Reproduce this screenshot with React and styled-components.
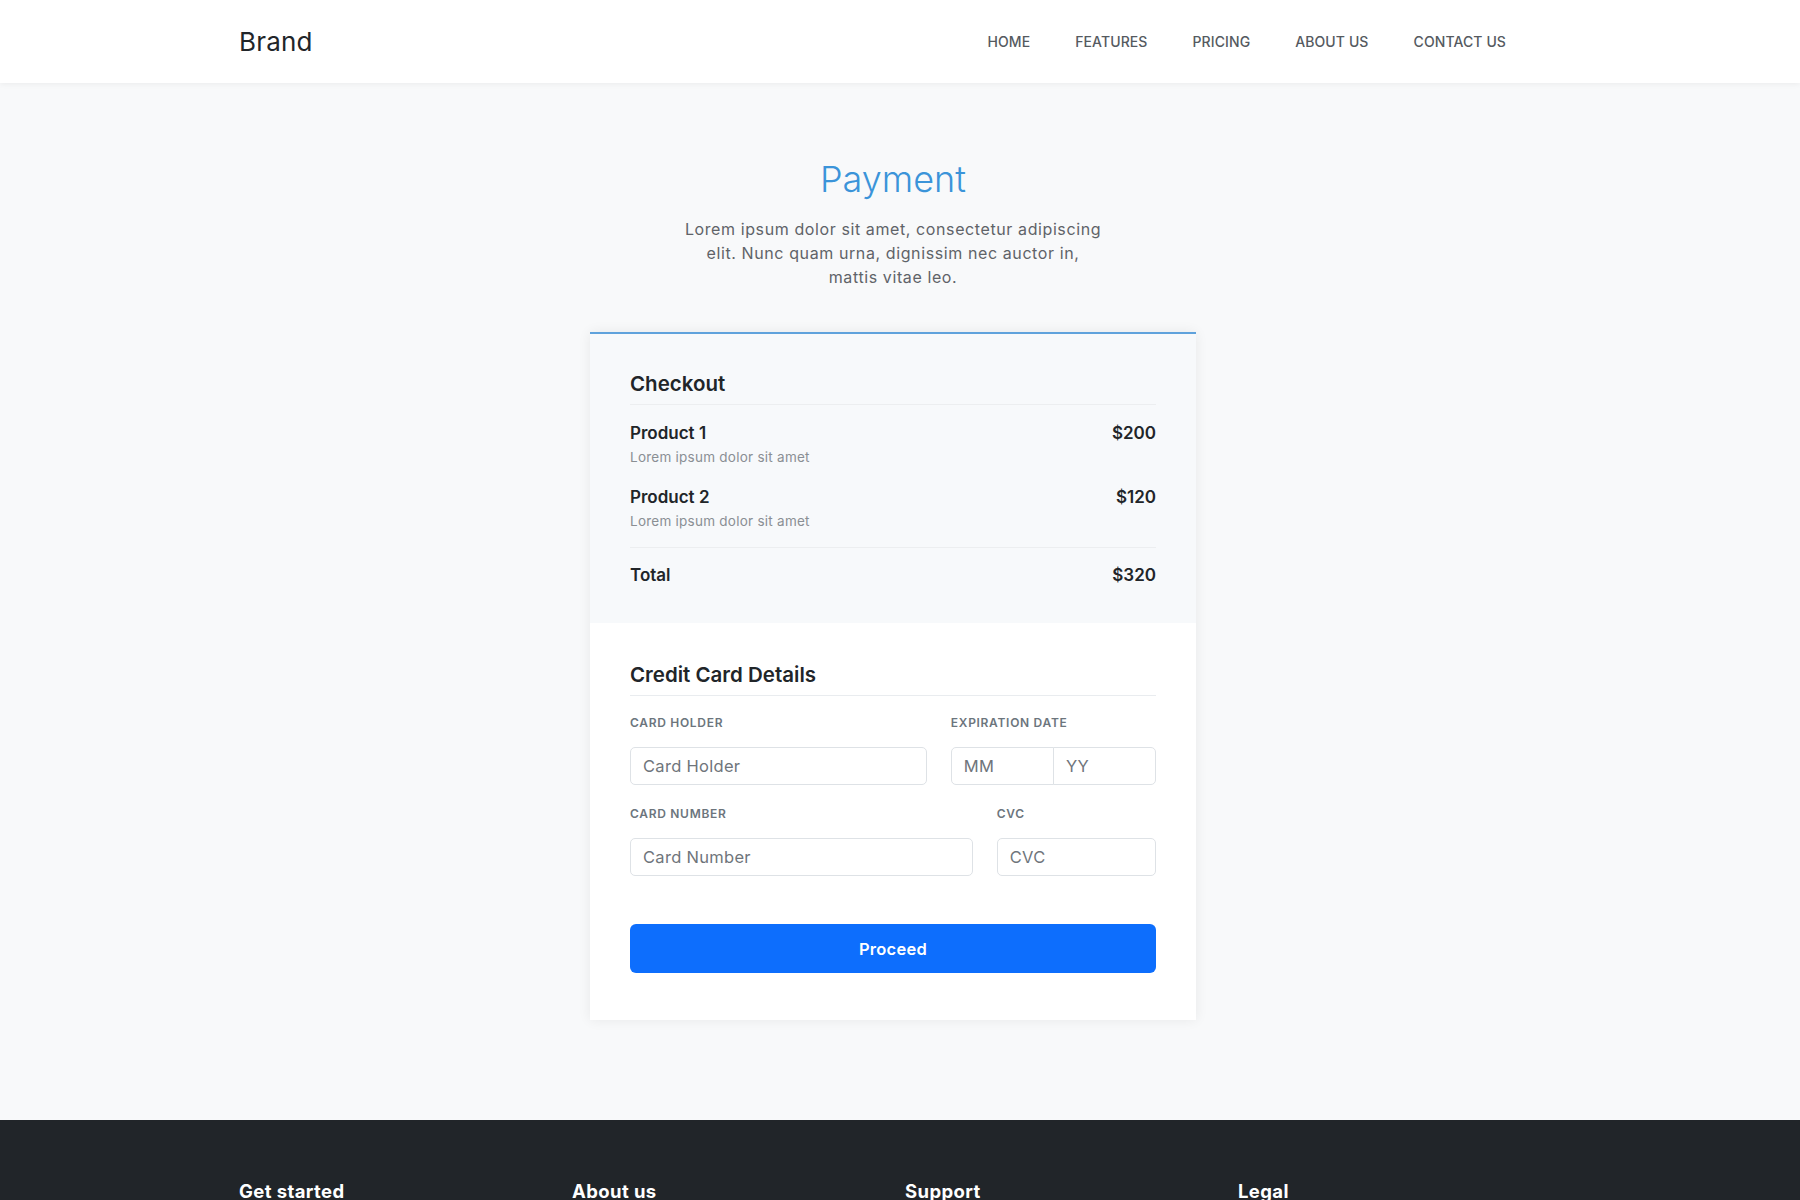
import React from "react";
import styled, { createGlobalStyle } from "styled-components";

const GlobalStyle = createGlobalStyle`
  *, *::before, *::after { box-sizing: border-box; }
  html, body { margin: 0; padding: 0; }
  body {
    background: #f8f9fa;
    color: #212529;
    font-family: Inter, "Noto Sans", "DejaVu Sans", sans-serif;
    font-size: 16px;
    -webkit-font-smoothing: antialiased;
  }
`;

/* Shared page container: 1308px content, centred in the scroll area */
const Container = styled.div`
  width: 1308px;
  margin: 0 calc(50% - 647px) 0 calc(50% - 661px);
`;

const Header = styled.header`
  background: #ffffff;
  height: 83px;
  box-shadow: 0 1px 6px rgba(0, 0, 0, 0.06);
  position: relative;
  z-index: 1;
`;

const HeaderInner = styled(Container)`
  height: 100%;
  display: flex;
  align-items: center;
  justify-content: space-between;
`;

const Brand = styled.a`
  font-size: 26px;
  font-weight: 400;
  color: #212529;
  text-decoration: none;
  letter-spacing: 0.2px;
`;

const NavList = styled.nav`
  display: flex;
  align-items: center;
  gap: 45px;
  margin-right: 41px;
`;

const NavLink = styled.a`
  font-size: 14px;
  font-weight: 500;
  color: #555a5f;
  text-decoration: none;
  text-transform: uppercase;
  letter-spacing: 0.1px;
`;

const Main = styled.main`
  padding-top: 75px;
  padding-bottom: 100px;
`;

const Intro = styled.div`
  text-align: center;
`;

const PageTitle = styled.h1`
  margin: 0;
  font-size: 36px;
  font-weight: 300;
  line-height: 42px;
  color: #3b94d9;
`;

const Lead = styled.p`
  margin: 17px 0 0;
  font-size: 16px;
  line-height: 24px;
  letter-spacing: 0.6px;
  color: #5f6368;
`;

const Card = styled.section`
  width: 606px;
  margin: 43px auto 0;
  background: #ffffff;
  border-top: 2px solid #5fa2dc;
  box-shadow: 0 0 12px rgba(0, 0, 0, 0.07);
`;

const CardSection = styled.div`
  background: ${(p) => (p.$muted ? "#f7f9fb" : "#ffffff")};
  padding: ${(p) => p.$padding};
`;

const SectionTitle = styled.h4`
  margin: 0;
  font-size: 20.5px;
  font-weight: 600;
  line-height: 24px;
  color: #212529;
  padding-bottom: 8px;
  border-bottom: 1px solid ${(p) => (p.$muted ? "#eceef0" : "#e9ecef")};
`;

const ItemList = styled.ul`
  list-style: none;
  margin: 8px 0 0;
  padding: 0;
`;

const Item = styled.li`
  display: flex;
  justify-content: space-between;
  align-items: flex-start;
  padding: 10px 0;
`;

const ItemName = styled.div`
  font-size: 17px;
  font-weight: 600;
  line-height: 20px;
  color: #212529;
`;

const ItemDesc = styled.div`
  margin-top: 4px;
  font-size: 13.5px;
  line-height: 20px;
  letter-spacing: 0.25px;
  color: #8a8f94;
`;

const Price = styled.span`
  font-size: 17px;
  font-weight: 600;
  line-height: 20px;
  color: #212529;
`;

const Divider = styled.hr`
  margin: 6px 0 0;
  border: 0;
  border-top: 1px solid #eceef0;
`;

const TotalRow = styled.div`
  display: flex;
  justify-content: space-between;
  margin-top: 17px;
  font-size: 17px;
  font-weight: 600;
  line-height: 20px;
`;

const FormRow = styled.div`
  display: flex;
  gap: 24px;
  margin-top: ${(p) => p.$top};
`;

const Col = styled.div`
  flex: 0 0 calc((100% + 24px) * ${(p) => p.$span} / 12 - 24px);
  min-width: 0;
`;

const Label = styled.label`
  display: block;
  font-size: 12px;
  font-weight: 600;
  line-height: 18px;
  letter-spacing: 0.7px;
  text-transform: uppercase;
  color: #6c757d;
  margin-bottom: 15px;
`;

const Input = styled.input`
  display: block;
  width: 100%;
  height: 38px;
  padding: 0 12px;
  font-family: inherit;
  font-size: 16.5px;
  letter-spacing: 0.3px;
  color: #212529;
  background: #ffffff;
  border: 1px solid #dee2e6;
  border-radius: 5px;
  outline: none;
  &::placeholder { color: #6f757b; }
`;

const InputGroup = styled.div`
  display: flex;
  & > input { flex: 1 1 0; min-width: 0; }
  & > input:first-child { border-radius: 5px 0 0 5px; }
  & > input:last-child { border-radius: 0 5px 5px 0; margin-left: -1px; }
`;

const PrimaryButton = styled.button`
  display: block;
  width: 100%;
  height: 49px;
  margin-top: 48px;
  border: 0;
  border-radius: 6px;
  background: #0d6efd;
  color: #ffffff;
  font-family: inherit;
  font-size: 16.5px;
  font-weight: 600;
  letter-spacing: 0.25px;
  cursor: pointer;
`;

const Footer = styled.footer`
  background: #212529;
  color: #ffffff;
  padding: 60px 0 64px;
`;

const FooterGrid = styled(Container)`
  display: grid;
  grid-template-columns: repeat(4, 1fr);
  column-gap: 24px;
`;

const FooterHeading = styled.h5`
  margin: 0 0 16px;
  font-size: 18.5px;
  font-weight: 700;
  line-height: 22px;
  letter-spacing: 0.4px;
  color: #ffffff;
`;

const FooterLinks = styled.ul`
  list-style: none;
  margin: 0;
  padding: 0;
  display: flex;
  flex-direction: column;
  gap: 8px;
`;

const FooterLink = styled.a`
  font-size: 15px;
  color: #adb5bd;
  text-decoration: none;
`;

const navItems = ["Home", "Features", "Pricing", "About us", "Contact us"];

const products = [
  { name: "Product 1", desc: "Lorem ipsum dolor sit amet", price: "$200" },
  { name: "Product 2", desc: "Lorem ipsum dolor sit amet", price: "$120" },
];

const footerColumns = [
  { title: "Get started", links: ["Home", "Sign up", "Downloads"] },
  { title: "About us", links: ["Company Information", "Contact us", "Reviews"] },
  { title: "Support", links: ["FAQ", "Help desk", "Forums"] },
  { title: "Legal", links: ["Terms of Service", "Terms of Use", "Privacy Policy"] },
];

export default function App() {
  return (
    <>
      <GlobalStyle />
      <Header>
        <HeaderInner>
          <Brand href="#">Brand</Brand>
          <NavList>
            {navItems.map((item) => (
              <NavLink key={item} href="#">
                {item}
              </NavLink>
            ))}
          </NavList>
        </HeaderInner>
      </Header>

      <Main>
        <Container>
          <Intro>
            <PageTitle>Payment</PageTitle>
            <Lead>
              Lorem ipsum dolor sit amet, consectetur adipiscing
              <br />
              elit. Nunc quam urna, dignissim nec auctor in,
              <br />
              mattis vitae leo.
            </Lead>
          </Intro>

          <Card>
            <CardSection $muted $padding="38px 40px 38px">
              <SectionTitle $muted>Checkout</SectionTitle>
              <ItemList>
                {products.map((p) => (
                  <Item key={p.name}>
                    <div>
                      <ItemName>{p.name}</ItemName>
                      <ItemDesc>{p.desc}</ItemDesc>
                    </div>
                    <Price>{p.price}</Price>
                  </Item>
                ))}
              </ItemList>
              <Divider />
              <TotalRow>
                <span>Total</span>
                <span>$320</span>
              </TotalRow>
            </CardSection>

            <CardSection $padding="40px 40px 47px">
              <SectionTitle>Credit Card Details</SectionTitle>
              <FormRow $top="18px">
                <Col $span={7}>
                  <Label htmlFor="card-holder">Card Holder</Label>
                  <Input id="card-holder" type="text" placeholder="Card Holder" />
                </Col>
                <Col $span={5}>
                  <Label htmlFor="exp-month">Expiration Date</Label>
                  <InputGroup>
                    <Input id="exp-month" type="text" placeholder="MM" />
                    <Input type="text" placeholder="YY" />
                  </InputGroup>
                </Col>
              </FormRow>
              <FormRow $top="20px">
                <Col $span={8}>
                  <Label htmlFor="card-number">Card Number</Label>
                  <Input id="card-number" type="text" placeholder="Card Number" />
                </Col>
                <Col $span={4}>
                  <Label htmlFor="cvc">CVC</Label>
                  <Input id="cvc" type="text" placeholder="CVC" />
                </Col>
              </FormRow>
              <PrimaryButton type="button">Proceed</PrimaryButton>
            </CardSection>
          </Card>
        </Container>
      </Main>

      <Footer>
        <FooterGrid>
          {footerColumns.map((col) => (
            <div key={col.title}>
              <FooterHeading>{col.title}</FooterHeading>
              <FooterLinks>
                {col.links.map((l) => (
                  <li key={l}>
                    <FooterLink href="#">{l}</FooterLink>
                  </li>
                ))}
              </FooterLinks>
            </div>
          ))}
        </FooterGrid>
      </Footer>
    </>
  );
}
